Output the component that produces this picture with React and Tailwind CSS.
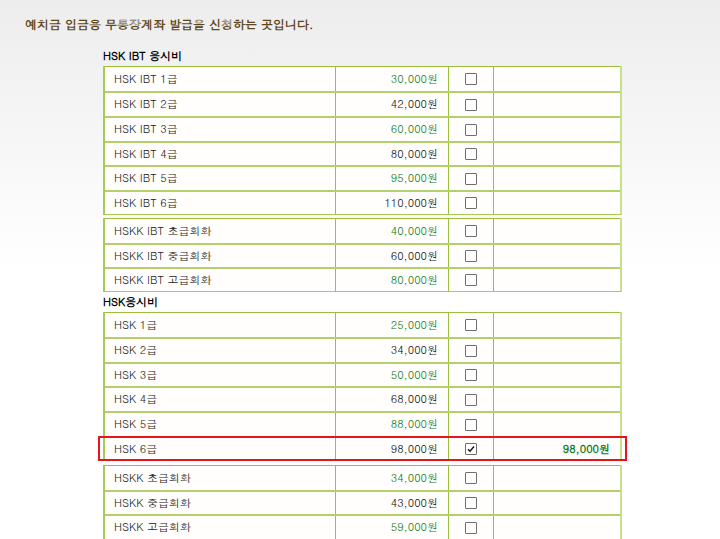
import React from "react";

const font = { fontFamily: '"Dotum", "Liberation Sans", "Noto Sans CJK KR", sans-serif' };

function Check({ checked }) {
  return (
    <span className="inline-flex h-[12px] w-[12px] items-center justify-center rounded-[1px] border border-[#6e6e6e] bg-white">
      {checked && (
        <svg width="8" height="8" viewBox="0 0 8 8">
          <path d="M1 4.2 L3 6.2 L7 1.5" fill="none" stroke="#111" strokeWidth="1.4" />
        </svg>
      )}
    </span>
  );
}

function Row({ label, price, green, checked, total, first, h }) {
  return (
    <div
      className={"flex " + (first ? "border-t border-[#9cbf3c]" : "border-t-2 border-t-[#b3d06a]")}
      style={{ height: h }}
    >
      <div className="flex w-[231px] items-center border-r border-[#9cbf3c] pl-[9px] text-[11px] text-[#222]">
        {label}
      </div>
      <div
        className={
          "flex w-[113px] items-center justify-end border-r border-[#9cbf3c] pr-[10px] text-[11px] " +
          (green ? "text-[#0e7a20]" : "text-[#111]")
        }
      >
        {price}
      </div>
      <div className="flex w-[45px] items-center justify-center border-r border-[#9cbf3c]">
        <Check checked={checked} />
      </div>
      <div className="flex flex-1 items-center justify-end pr-[10px] text-[11px] font-bold text-[#0e7a20]">
        {total}
      </div>
    </div>
  );
}

function Table({ rows, heights, highlight }) {
  return (
    <div className="relative w-[519px] border-l-2 border-r-2 border-b border-l-[#a9c955] border-r-[#c8e08e] border-b-[#a9c955] bg-[#fffefc]">
      {rows.map((r, i) => (
        <Row key={i} {...r} first={i === 0} h={heights[i]} />
      ))}
      {highlight && (
        <div className="pointer-events-none absolute bottom-[-1px] left-[-7px] right-[-7px] h-[25px] border-2 border-[#e8141b]" />
      )}
    </div>
  );
}

export default function App() {
  const t1 = [
    { label: "HSK IBT 1급", price: "30,000원", green: true },
    { label: "HSK IBT 2급", price: "42,000원" },
    { label: "HSK IBT 3급", price: "60,000원", green: true },
    { label: "HSK IBT 4급", price: "80,000원" },
    { label: "HSK IBT 5급", price: "95,000원", green: true },
    { label: "HSK IBT 6급", price: "110,000원" },
  ];
  const t2 = [
    { label: "HSKK IBT 초급회화", price: "40,000원", green: true },
    { label: "HSKK IBT 중급회화", price: "60,000원" },
    { label: "HSKK IBT 고급회화", price: "80,000원", green: true },
  ];
  const t3 = [
    { label: "HSK 1급", price: "25,000원", green: true },
    { label: "HSK 2급", price: "34,000원" },
    { label: "HSK 3급", price: "50,000원", green: true },
    { label: "HSK 4급", price: "68,000원" },
    { label: "HSK 5급", price: "88,000원", green: true },
    { label: "HSK 6급", price: "98,000원", checked: true, total: "98,000원" },
  ];
  const t4 = [
    { label: "HSKK 초급회화", price: "34,000원", green: true },
    { label: "HSKK 중급회화", price: "43,000원" },
    { label: "HSKK 고급회화", price: "59,000원", green: true },
  ];
  return (
    <div
      className="h-[539px] w-[720px] overflow-hidden bg-gradient-to-b from-[#ededed] via-white to-white"
      style={font}
    >
      <div className="h-[46px] pl-[25px] pt-[15px] text-[12px] font-bold text-[#614818]">
        예치금 입금용 무통장계좌 발급을 신청하는 곳입니다.
      </div>
      <div className="ml-[103px] flex flex-col">
        <div className="flex h-[20px] items-center text-[11px] font-bold text-black">HSK IBT 응시비</div>
        <Table rows={t1} heights={[25, 25, 25, 24, 25, 24]} />
        <div className="h-[3px]" />
        <Table rows={t2} heights={[25, 24, 24]} />
        <div className="flex h-[20px] items-center text-[11px] font-bold text-black">HSK응시비</div>
        <Table rows={t3} heights={[25, 25, 24, 25, 25, 24]} highlight />
        <div className="h-[4px]" />
        <Table rows={t4} heights={[25, 24, 25]} />
      </div>
    </div>
  );
}
